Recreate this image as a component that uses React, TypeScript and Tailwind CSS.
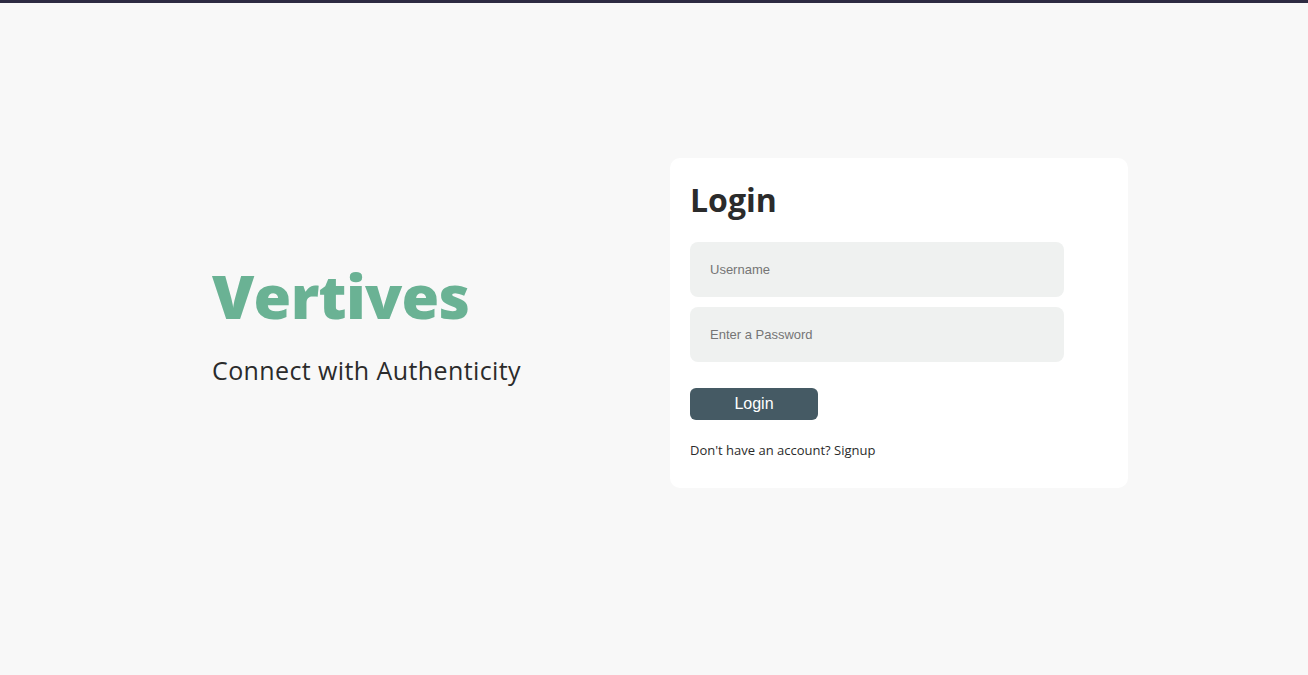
export default function App() {
  return (
    <div className="min-h-[675px] bg-[#f8f8f8] font-['Open_Sans',sans-serif]">
      {/* top strip */}
      <div className="h-[3px] bg-[#2d2b42]" />

      <main className="flex h-[640px] items-center pl-[212px]">
        <div className="grid w-[916px] grid-cols-2 items-center">
          {/* Brand */}
          <section className="pt-[8px]">
            <h1 className="text-[61px] leading-none font-extrabold tracking-[-0.7px] text-[#6ab294]">
              Vertives
            </h1>
            <p className="mt-[26px] text-[25px] tracking-[0.4px] text-[#2b2b2b]">
              Connect with Authenticity
            </p>
          </section>

          {/* Login card */}
          <section className="rounded-[10px] bg-white px-5 pt-[22px] pb-[27px]">
            <h2 className="text-[32px] leading-tight font-bold text-[#2b2b2b]">Login</h2>

            <form className="mt-[22px] flex flex-col" onSubmit={(e) => e.preventDefault()}>
              <input
                type="text"
                placeholder="Username"
                className="h-[55px] w-[374px] rounded-[8px] bg-[#eff1f0] px-5 font-['Liberation_Sans',sans-serif] text-[13px] text-[#2b2b2b] outline-none placeholder:text-[#757575]"
              />
              <input
                type="password"
                placeholder="Enter a Password"
                className="mt-[10px] h-[55px] w-[374px] rounded-[8px] bg-[#eff1f0] px-5 font-['Liberation_Sans',sans-serif] text-[13px] text-[#2b2b2b] outline-none placeholder:text-[#757575]"
              />
              <button
                type="submit"
                className="mt-[26px] h-8 w-[128px] rounded-[6px] bg-[#455a64] font-['Liberation_Sans',sans-serif] text-[16px] text-white"
              >
                Login
              </button>
            </form>

            <p className="mt-[21px] text-[13px] text-[#2b2b2b]">
              Don't have an account? <a href="#">Signup</a>
            </p>
          </section>
        </div>
      </main>
    </div>
  );
}
